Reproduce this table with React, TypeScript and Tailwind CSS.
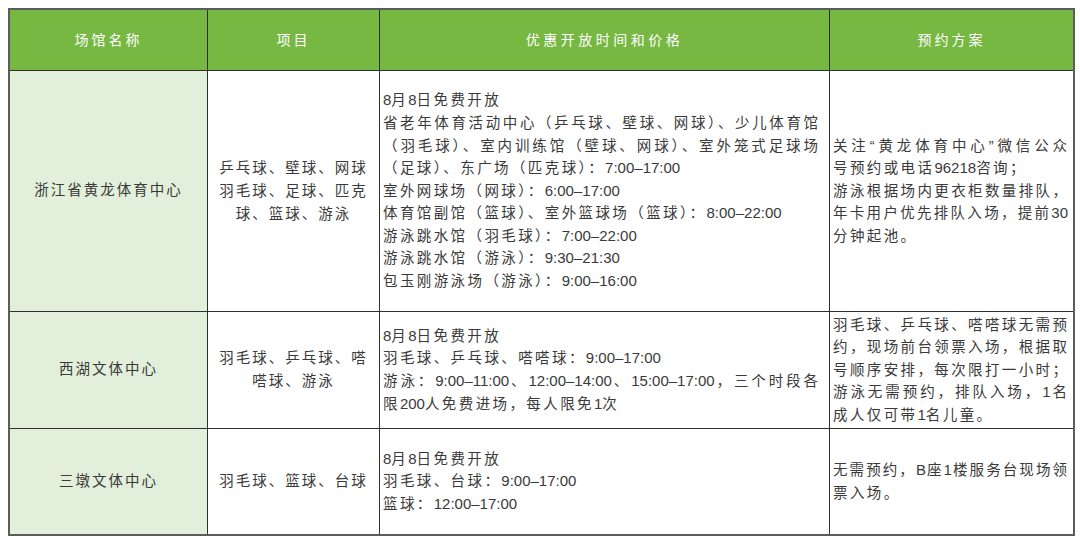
import React from 'react'

type Line = { t: string; full?: boolean }

type Row = {
  venue: string
  sports: string[]
  hours: Line[]
  booking: Line[]
}

const rows: Row[] = [
  {
    venue: '浙江省黄龙体育中心',
    sports: ['乒乓球、壁球、网球', '羽毛球、足球、匹克', '球、篮球、游泳'],
    hours: [
      { t: '8月8日免费开放' },
      { t: '省老年体育活动中心（乒乓球、壁球、网球）、少儿体育馆', full: true },
      { t: '（羽毛球）、室内训练馆（壁球、网球）、室外笼式足球场', full: true },
      { t: '（足球）、东广场（匹克球）：7:00–17:00' },
      { t: '室外网球场（网球）：6:00–17:00' },
      { t: '体育馆副馆（篮球）、室外篮球场（篮球）：8:00–22:00' },
      { t: '游泳跳水馆（羽毛球）：7:00–22:00' },
      { t: '游泳跳水馆（游泳）：9:30–21:30' },
      { t: '包玉刚游泳场（游泳）：9:00–16:00' },
    ],
    booking: [
      { t: '关注“黄龙体育中心”微信公众', full: true },
      { t: '号预约或电话96218咨询；' },
      { t: '游泳根据场内更衣柜数量排队，', full: true },
      { t: '年卡用户优先排队入场，提前30', full: true },
      { t: '分钟起池。' },
    ],
  },
  {
    venue: '西湖文体中心',
    sports: ['羽毛球、乒乓球、嗒', '嗒球、游泳'],
    hours: [
      { t: '8月8日免费开放' },
      { t: '羽毛球、乒乓球、嗒嗒球：9:00–17:00' },
      { t: '游泳：9:00–11:00、12:00–14:00、15:00–17:00，三个时段各', full: true },
      { t: '限200人免费进场，每人限免1次' },
    ],
    booking: [
      { t: '羽毛球、乒乓球、嗒嗒球无需预', full: true },
      { t: '约，现场前台领票入场，根据取', full: true },
      { t: '号顺序安排，每次限打一小时；', full: true },
      { t: '游泳无需预约，排队入场，1名', full: true },
      { t: '成人仅可带1名儿童。' },
    ],
  },
  {
    venue: '三墩文体中心',
    sports: ['羽毛球、篮球、台球'],
    hours: [{ t: '8月8日免费开放' }, { t: '羽毛球、台球：9:00–17:00' }, { t: '篮球：12:00–17:00' }],
    booking: [{ t: '无需预约，B座1楼服务台现场领', full: true }, { t: '票入场。' }],
  },
]

// latin runs keep normal spacing, CJK runs are spread out
function Spaced({ text }: { text: string }) {
  const parts = text.split(/([\x20-\x7E–]+)/).filter(Boolean)
  return (
    <>
      {parts.map((p, i) =>
        /^[\x20-\x7E–]+$/.test(p) ? (
          <span key={i} className="text-[15px] tracking-normal">{p}</span>
        ) : (
          <span key={i}>{p}</span>
        )
      )}
    </>
  )
}

const font = "font-['Liberation_Sans','Noto_Sans_CJK_SC',sans-serif]"

export default function App() {
  return (
    <div className={`min-h-screen bg-white pt-2 pl-2 ${font}`}>
      <div className="grid w-fit grid-cols-[197px_171px_449px_243px] grid-rows-[60px_240px_116px_105px] gap-px border-2 border-[#5c5c5c] bg-[#2f2f2f]">
        {/* Header */}
        <div className="flex items-center justify-center bg-[#77b843] text-[14px] tracking-[3px] text-white">场馆名称</div>
        <div className="flex items-center justify-center bg-[#77b843] text-[14px] tracking-[3px] text-white">项目</div>
        <div className="flex items-center justify-center bg-[#77b843] text-[14px] tracking-[3.5px] text-white">优惠开放时间和价格</div>
        <div className="flex items-center justify-center bg-[#77b843] text-[14px] tracking-[3px] text-white">预约方案</div>

        {rows.map((r) => (
          <React.Fragment key={r.venue}>
            <div className="flex items-center justify-center bg-[#e2efda] text-[14.5px] tracking-[2px] text-[#3a3a3a]">
              {r.venue}
            </div>
            <div className="flex flex-col items-center justify-center bg-white text-[14.5px] leading-[23px] tracking-[2px] text-[#3a3a3a]">
              {r.sports.map((l) => (
                <div key={l} className="whitespace-nowrap">{l}</div>
              ))}
            </div>
            <div className="flex flex-col justify-center bg-white px-[3px] text-[14.5px] leading-[22.6px] text-[#3a3a3a]">
              {r.hours.map((l, i) =>
                l.full ? (
                  <div key={i} className="w-[436px] text-justify tracking-[1px] [text-align-last:justify]">
                    <Spaced text={l.t} />
                  </div>
                ) : (
                  <div key={i} className="whitespace-nowrap tracking-[2.4px]">
                    <Spaced text={l.t} />
                  </div>
                )
              )}
            </div>
            <div className="flex flex-col justify-center bg-white px-[3px] text-[14.5px] leading-[22.6px] text-[#3a3a3a]">
              {r.booking.map((l, i) =>
                l.full ? (
                  <div key={i} className="w-[235px] text-justify tracking-[1px] [text-align-last:justify]">
                    <Spaced text={l.t} />
                  </div>
                ) : (
                  <div key={i} className="whitespace-nowrap tracking-[2.4px]">
                    <Spaced text={l.t} />
                  </div>
                )
              )}
            </div>
          </React.Fragment>
        ))}
      </div>
    </div>
  )
}
